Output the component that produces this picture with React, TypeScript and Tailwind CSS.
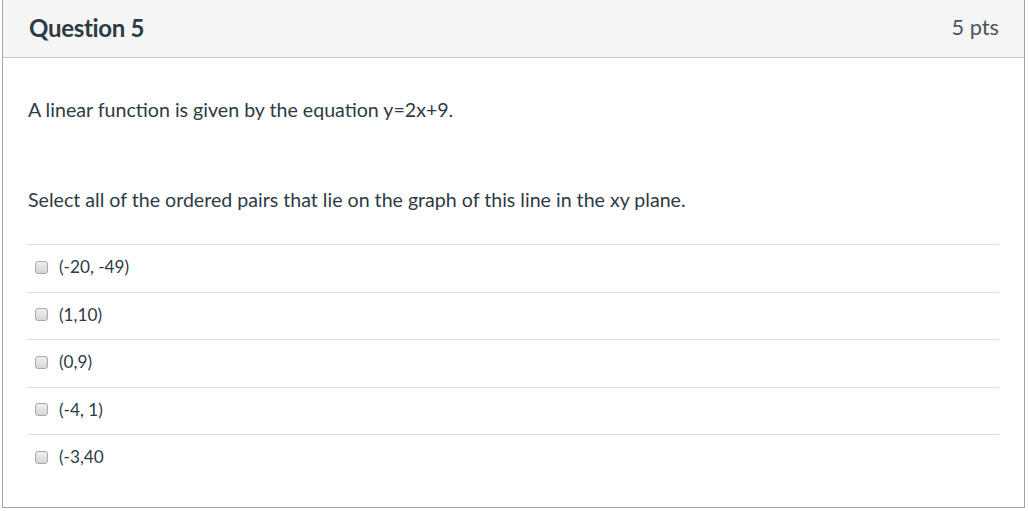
const options = ['(-20, -49)', '(1,10)', '(0,9)', '(-4, 1)', '(-3,40'];

function Box() {
  return (
    <span className="inline-block h-[13px] w-[13px] shrink-0 rounded-[3px] border border-[#a9a9a9] bg-gradient-to-b from-[#efefef] to-[#d6d6d6]" />
  );
}

export default function App() {
  return (
    <div className="min-h-screen bg-white font-['Lato','Liberation_Sans',sans-serif] text-[#2d3b45]">
      <div className="ml-[2px] w-[1023px] border-x border-b border-[#a5a5a5]">
        <div className="flex h-[58px] items-center justify-between border-b border-[#c7c7c7] bg-[#f5f5f5] pb-[2px] pl-[26px] pr-[25px]">
          <h2 className="text-[24px] font-bold tracking-[-0.3px] text-[#2d3b45]">Question 5</h2>
          <span className="text-[21.8px] text-[#4a5560]">5 pts</span>
        </div>
        <div className="pl-[25px] pr-[25px] pt-[39px] pb-[25px]">
          <p className="text-[19.6px] leading-[26px]">A linear function is given by the equation y=2x+9.</p>
          <p className="mt-[64px] text-[19.6px] leading-[26px]">
            Select all of the ordered pairs that lie on the graph of this line in the xy plane.
          </p>
          <div className="mt-[31px]">
            {options.map((o) => (
              <label key={o} className="flex h-[47.5px] items-center gap-[11px] border-t border-[#dcdcdc] pb-[2px] pl-[7px]">
                <Box />
                <span className="text-[17.2px]">{o}</span>
              </label>
            ))}
          </div>
        </div>
      </div>
    </div>
  );
}
